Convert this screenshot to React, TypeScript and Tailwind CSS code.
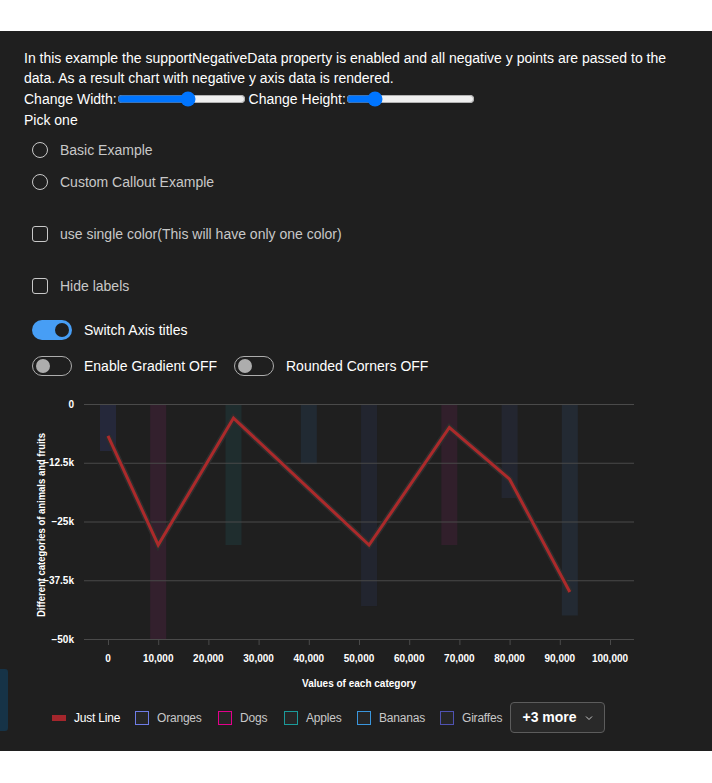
import React from "react";

const font = { fontFamily: '"Liberation Sans", Arial, sans-serif' };

function Radio({ label }: { label: string }) {
  return (
    <div className="flex h-8 items-center pl-2">
      <span className="h-4 w-4 rounded-full border border-[#c8c8c8]" />
      <span className="ml-3 text-[14px] text-[#c8c8c8]">{label}</span>
    </div>
  );
}

function Check({ label }: { label: string }) {
  return (
    <div className="flex h-8 items-center pl-2">
      <span className="h-4 w-4 rounded-[3px] border border-[#c8c8c8]" />
      <span className="ml-3 text-[14px] text-[#c8c8c8]">{label}</span>
    </div>
  );
}

function Toggle({ on, label }: { on?: boolean; label: string }) {
  return (
    <div className="flex h-5 items-center">
      {on ? (
        <span className="flex h-5 w-10 items-center justify-end rounded-full bg-[#479ef5] pr-[3px]">
          <span className="h-[14px] w-[14px] rounded-full bg-[#1f1f1f]" />
        </span>
      ) : (
        <span className="flex h-5 w-10 items-center rounded-full border border-[#adadad] pl-[3px]">
          <span className="h-[14px] w-[14px] rounded-full bg-[#adadad]" />
        </span>
      )}
      <span className="ml-3 text-[14px] text-white">{label}</span>
    </div>
  );
}

const xs = (v: number) => 108 + v * 0.00502;
const ys = (v: number) => 404 + (-v / 1000) * 4.7;

const bars = [
  { x: 0, v: -10000, c: "#25283a" },
  { x: 10000, v: -50000, c: "#33202d" },
  { x: 25000, v: -30000, c: "#1f2d2e" },
  { x: 40000, v: -12800, c: "#212a33" },
  { x: 52000, v: -43000, c: "#22252f" },
  { x: 68000, v: -30000, c: "#311f2b" },
  { x: 80000, v: -20000, c: "#232630" },
  { x: 92000, v: -45000, c: "#232a33" },
];

const pts = [
  [0, -6800],
  [10000, -30000],
  [25000, -3000],
  [52000, -30000],
  [68000, -5000],
  [80000, -16000],
  [92000, -40000],
];

function Chart() {
  const poly = pts.map(([x, y]) => `${xs(x)},${ys(y)}`).join(" ");
  const yTicks = [
    [0, "0"],
    [-12500, "−12.5k"],
    [-25000, "−25k"],
    [-37500, "−37.5k"],
    [-50000, "−50k"],
  ] as const;
  const xTicks = [0, 10000, 20000, 30000, 40000, 50000, 60000, 70000, 80000, 90000, 100000];
  return (
    <svg width={712} height={305} viewBox="0 390 712 305" className="block" style={font}>
      {bars.map((b, i) => (
        <rect key={i} x={xs(b.x) - 8} y={404} width={16} height={ys(b.v) - 404} fill={b.c} />
      ))}
      {yTicks.map(([v, t]) => (
        <g key={t}>
          <line x1={84} x2={634} y1={ys(v) + 0.5} y2={ys(v) + 0.5} stroke="#4a4a4a" strokeWidth={1} />
          <text x={74} y={ys(v) + 3.5} textAnchor="end" fontSize={10} fontWeight={700} fill="#ffffff">
            {t}
          </text>
        </g>
      ))}
      {xTicks.map((v) => (
        <g key={v}>
          <line x1={xs(v) + 0.5} x2={xs(v) + 0.5} y1={639} y2={645} stroke="#4a4a4a" />
          <text x={xs(v)} y={662} textAnchor="middle" fontSize={10} fontWeight={700} fill="#ffffff">
            {v.toLocaleString("en-US")}
          </text>
        </g>
      ))}
      <polyline points={poly} fill="none" stroke="#2e2e2e" strokeWidth={6} strokeLinejoin="miter" />
      <polyline points={poly} fill="none" stroke="#ab2a2b" strokeWidth={3} strokeLinejoin="miter" />
      <text
        transform="translate(45,525) rotate(-90)"
        textAnchor="middle"
        fontSize={10}
        fontWeight={700}
        fill="#ffffff"
        textLength={184}
        lengthAdjust="spacingAndGlyphs"
      >
        Different categories of animals and fruits
      </text>
      <text x={359} y={687} textAnchor="middle" fontSize={10} fontWeight={700} fill="#ffffff">
        Values of each category
      </text>
    </svg>
  );
}

function LegendBox({ color, label, w }: { color: string; label: string; w: string }) {
  return (
    <div className={`flex items-center ${w}`}>
      <span className="h-[14px] w-[14px] shrink-0 border bg-[#262626]" style={{ borderColor: color }} />
      <span className="ml-2 whitespace-nowrap text-[12px] tracking-[-0.2px] text-[#c8c8c8]">{label}</span>
    </div>
  );
}

export default function App() {
  return (
    <div className="w-[712px] bg-white" style={font}>
      <div className="h-[31px] bg-white" />
      <div className="relative bg-[#1f1f1f] pb-[18px]">
        <div className="px-6 pt-[17px]">
          <p className="text-[14px] leading-5 text-white">
            In this example the supportNegativeData property is enabled and all negative y points are passed to the
            data. As a result chart with negative y axis data is rendered.
          </p>
          <div className="flex h-[22px] items-center text-[14px] text-white">
            <span>Change Width:</span>
            <input type="range" min={0} max={100} defaultValue={56} className="m-0 h-4 w-[129px]" />
            <span className="ml-[3px]">Change Height:</span>
            <input type="range" min={0} max={100} defaultValue={19} className="m-0 h-4 w-[129px]" />
          </div>
          <div className="h-5 text-[14px] leading-5 text-white">Pick one</div>
          <div className="mt-1">
            <Radio label="Basic Example" />
            <Radio label="Custom Callout Example" />
          </div>
          <div className="mt-5">
            <Check label="use single color(This will have only one color)" />
          </div>
          <div className="mt-5">
            <Check label="Hide labels" />
          </div>
          <div className="mt-[18px] pl-2">
            <Toggle on label="Switch Axis titles" />
          </div>
          <div className="mt-4 flex pl-2">
            <div className="w-[202px]">
              <Toggle label="Enable Gradient OFF" />
            </div>
            <Toggle label="Rounded Corners OFF" />
          </div>
        </div>
        <div className="mt-[14px]">
          <Chart />
        </div>
        <div className="mt-[7px] flex h-[31px] items-center pl-[52px]">
          <div className="flex w-[83px] items-center">
            <span className="h-[6px] w-[14px] bg-[#a4262c]" />
            <span className="ml-2 whitespace-nowrap text-[12px] tracking-[-0.2px] text-white">Just Line</span>
          </div>
          <LegendBox color="#6e7ce6" label="Oranges" w="w-[83px]" />
          <LegendBox color="#e3008c" label="Dogs" w="w-[66px]" />
          <LegendBox color="#1b9a9a" label="Apples" w="w-[73px]" />
          <LegendBox color="#3a96dd" label="Bananas" w="w-[83px]" />
          <LegendBox color="#4f52b2" label="Giraffes" w="w-[70px]" />
          <button className="flex h-[31px] w-[95px] items-center justify-center gap-2 rounded-[4px] border border-[#5c5c5c] bg-[#292929] text-[14px] font-bold text-white">
            <span>+3 more</span>
            <svg width="8" height="8" viewBox="0 0 8 8" fill="none">
              <path d="M1 2.5 L4 5.5 L7 2.5" stroke="#c8c8c8" strokeWidth="1" />
            </svg>
          </button>
        </div>
        <div className="absolute left-0 top-[638px] h-[62px] w-2 rounded-r-[3px] bg-[#163347]" />
      </div>
    </div>
  );
}
